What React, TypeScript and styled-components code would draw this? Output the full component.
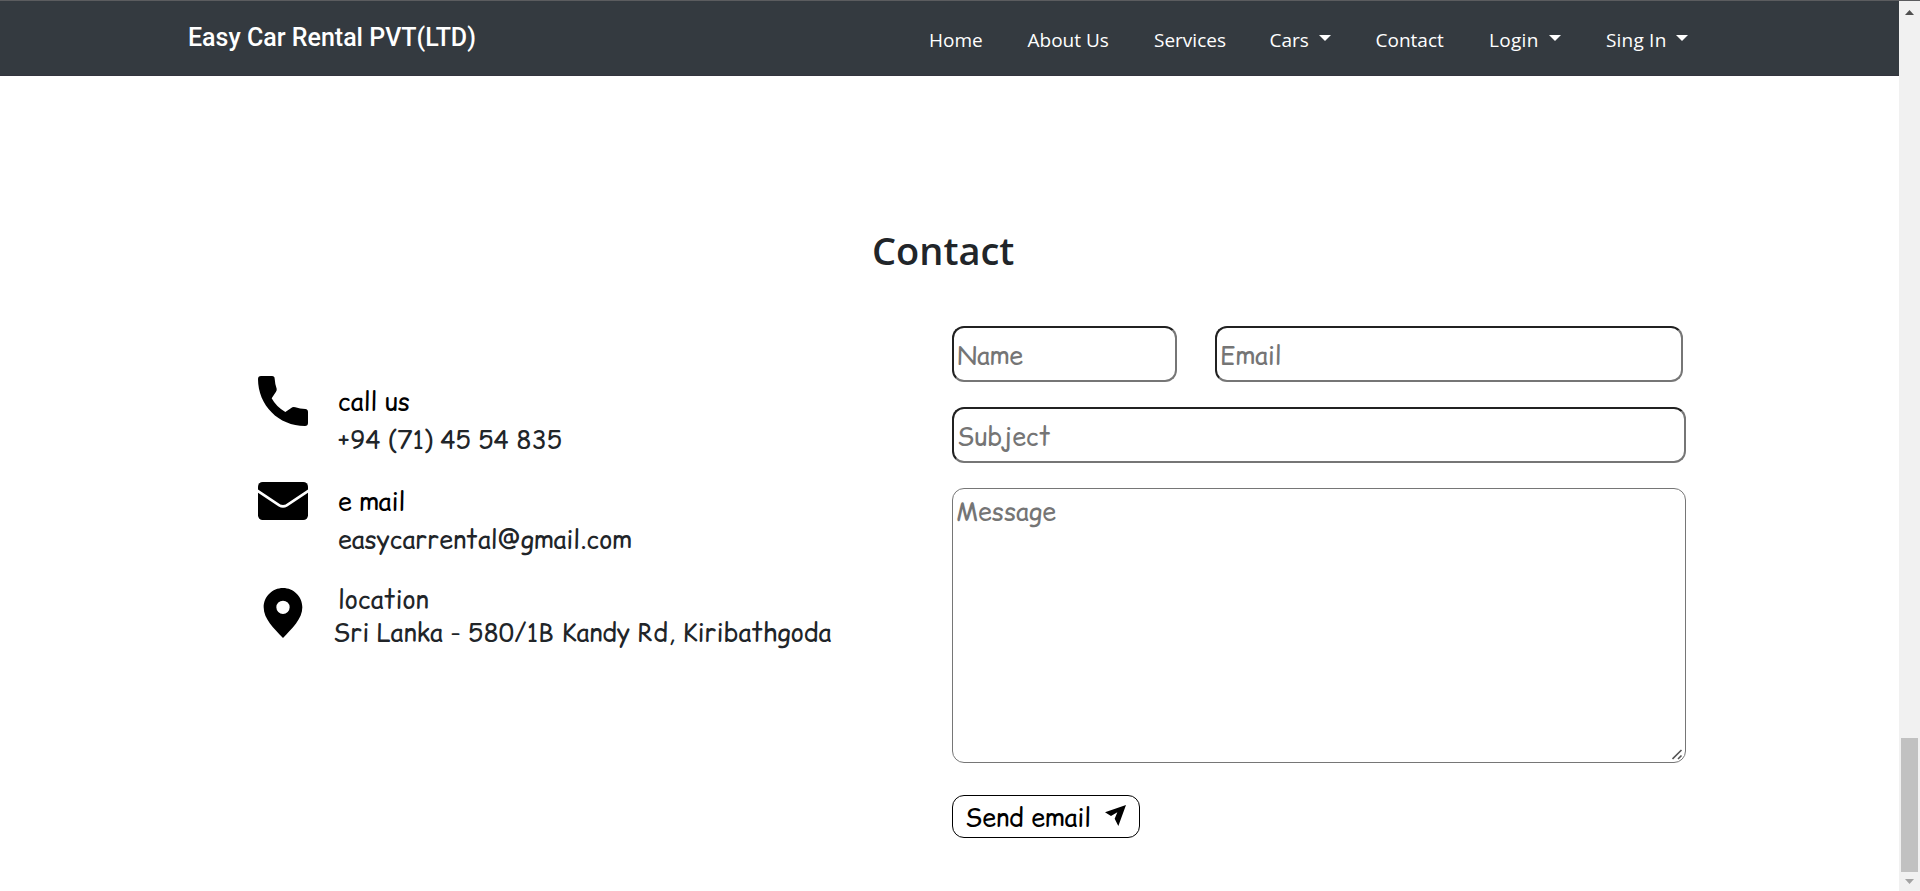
import React from "react";
import styled, { createGlobalStyle } from "styled-components";

const hand = `"Comic Relief", "Comic Neue", Inter, sans-serif`;

const GlobalStyle = createGlobalStyle`
  *, *::before, *::after { box-sizing: border-box; }
  html, body { margin: 0; padding: 0; height: 100%; overflow: hidden; background: #fff; }
  body { color: #212529; font-family: "Open Sans", "Noto Sans", sans-serif; }
`;

const Screen = styled.div`
  display: flex;
  flex-direction: column;
  width: 1920px;
  height: 891px;
  border-top: 1px solid #5b5c5f;
`;

const Viewport = styled.div`
  display: flex;
  flex: 1;
  min-height: 0;
`;

const Page = styled.div`
  flex: 1;
  min-width: 0;
  background: #fff;
`;

const Header = styled.header`
  display: flex;
  justify-content: space-between;
  height: 75px;
  padding: 0 209px 0 188px;
  background: #343a40;
  border-bottom: 1px solid #33343e;
  color: #fff;
`;

const Brand = styled.a`
  margin-top: 22px;
  font: 500 25px/29px Roboto, sans-serif;
  white-space: nowrap;
`;

const Nav = styled.nav`
  display: grid;
  grid-template-columns: 98.5px 126.5px 115.5px 106px 113.5px 117px 84px;
  margin-top: 26px;
`;

const NavLink = styled.a<{ $spacing?: number }>`
  display: flex;
  font-size: 19px;
  line-height: 26px;
  letter-spacing: ${(p) => p.$spacing ?? 0}px;
  white-space: nowrap;
`;

const Caret = styled.span`
  width: 12px;
  height: 6px;
  margin: 8px 0 0 10px;
  border: 6px solid transparent;
  border-top-color: #fff;
  border-bottom: 0;
`;

const Section = styled.main`
  padding: 148px 213px 0 258px;
`;

const Heading = styled.h2`
  margin: 0 0 50px 614px;
  font-size: 38px;
  font-weight: 600;
  line-height: 52px;
`;

const Columns = styled.div`
  display: grid;
  grid-template-columns: 694px 734px;
`;

const InfoList = styled.div`
  padding-top: 50px;
`;

const InfoRow = styled.div<{ $height: number }>`
  display: grid;
  grid-template-columns: 80px 1fr;
  align-items: start;
  height: ${(p) => p.$height}px;
`;

const InfoText = styled.div<{ $top: number; $gap: number }>`
  display: flex;
  flex-direction: column;
  gap: ${(p) => p.$gap}px;
  margin-top: ${(p) => p.$top}px;
`;

const Line = styled.span<{ $black?: boolean; $shift?: number; $height?: number }>`
  margin-left: ${(p) => p.$shift ?? 0}px;
  font: 25px/${(p) => p.$height ?? 35}px ${hand};
  font-feature-settings: "cv11";
  color: ${(p) => (p.$black ? "#000" : "#212529")};
  white-space: nowrap;
`;

const Form = styled.form`
  display: flex;
  flex-direction: column;
  align-items: flex-start;
`;

const FieldRow = styled.div`
  display: flex;
  gap: 38px;
  margin-bottom: 25px;
`;

const Input = styled.input<{ $width: number }>`
  width: ${(p) => p.$width}px;
  height: 56px;
  padding: 3px 2px 1px 3px;
  border: 2px inset #767676;
  border-radius: 12px;
  background: #fff;
  font: 25px ${hand};
  font-feature-settings: "cv11";
  &::placeholder { color: #757575; }
`;

const MessageBox = styled.div`
  position: relative;
`;

const Message = styled.textarea`
  display: block;
  width: 734px;
  height: 275px;
  padding: 5px 2px 2px 3px;
  border: 1px solid #767676;
  border-radius: 12px;
  background: #fff;
  font: 25px/35px ${hand};
  font-feature-settings: "cv11";
  resize: none;
  &::placeholder { color: #757575; }
`;

const Grip = styled.svg`
  position: absolute;
  right: 3px;
  bottom: 3px;
  width: 11px;
  height: 11px;
`;

const SendButton = styled.button`
  display: flex;
  justify-content: space-between;
  width: 188px;
  height: 43px;
  margin-top: 32px;
  padding: 4px 13px 0 12px;
  border: 1px solid #000;
  border-radius: 12px;
  background: #fff;
`;

const PlaneIcon = styled.svg`
  display: block;
  width: 21px;
  height: 21px;
  margin-top: 5px;
`;

const Scrollbar = styled.div`
  display: flex;
  flex-direction: column;
  align-items: center;
  width: 21px;
  background: #f1f1f1;
`;

const Track = styled.div`
  display: flex;
  flex: 1;
  flex-direction: column;
  justify-content: flex-end;
`;

const Thumb = styled.div`
  width: 17px;
  height: 134px;
  background: #c1c1c1;
`;

const ScrollArrow = styled.div<{ $down?: boolean }>`
  width: 9px;
  height: 5px;
  margin: ${(p) => (p.$down ? "7px 0 7px" : "9px 0 8px")};
  background: ${(p) => (p.$down ? "#a3a3a3" : "#505050")};
  clip-path: ${(p) => (p.$down ? "polygon(0 0, 100% 0, 50% 100%)" : "polygon(0 100%, 100% 100%, 50% 0)")};
`;

const PhoneIcon = () => (
  <svg width="50" height="50" viewBox="0 0 150 150">
    <path d="M9 0H42Q50 0 50 8Q51 24 56 38Q57 43 54 47L41 67Q55 93 82 108L103 94Q107 92 112 94Q126 99 142 99Q150 100 150 108V141Q150 150 141 150C62 150 0 88 0 9Q0 0 9 0Z" />
  </svg>
);

const MailIcon = () => (
  <svg width="50" height="38" viewBox="0 0 150 114">
    <rect width="150" height="114" rx="14" />
    <path d="M-4 25L64 70Q75 76 86 70L154 25" fill="none" stroke="#fff" strokeWidth="8" />
  </svg>
);

const PinIcon = () => (
  <svg width="50" height="50" viewBox="0 0 150 150">
    <path fillRule="evenodd" d="M75 0C43 0 17 26 17 58C17 93 48 122 75 150C102 122 133 93 133 58C133 26 107 0 75 0ZM75 38A20 20 0 1 1 75 78A20 20 0 1 1 75 38Z" />
  </svg>
);

export default function App() {
  return (
    <Screen>
      <GlobalStyle />
      <Viewport>
        <Page>
          <Header>
            <Brand>Easy Car Rental PVT(LTD)</Brand>
            <Nav>
              <NavLink>Home</NavLink>
              <NavLink>About Us</NavLink>
              <NavLink>Services</NavLink>
              <NavLink>Cars<Caret /></NavLink>
              <NavLink>Contact</NavLink>
              <NavLink $spacing={0.3}>Login<Caret /></NavLink>
              <NavLink $spacing={0.2}>Sing In<Caret /></NavLink>
            </Nav>
          </Header>
          <Section>
            <Heading>Contact</Heading>
            <Columns>
              <InfoList>
                <InfoRow $height={106}>
                  <PhoneIcon />
                  <InfoText $top={8} $gap={3}>
                    <Line $black>call us</Line>
                    <Line>+94 (71) 45 54 835</Line>
                  </InfoText>
                </InfoRow>
                <InfoRow $height={106}>
                  <MailIcon />
                  <InfoText $top={2} $gap={3}>
                    <Line $black>e mail</Line>
                    <Line>easycarrental@gmail.com</Line>
                  </InfoText>
                </InfoRow>
                <InfoRow $height={80}>
                  <PinIcon />
                  <InfoText $top={-5} $gap={0}>
                    <Line $height={33}>location</Line>
                    <Line $height={33} $shift={-5}>Sri Lanka - 580/1B Kandy Rd, Kiribathgoda</Line>
                  </InfoText>
                </InfoRow>
              </InfoList>
              <Form>
                <FieldRow>
                  <Input $width={225} placeholder="Name" />
                  <Input $width={468} placeholder="Email" />
                </FieldRow>
                <FieldRow>
                  <Input $width={734} placeholder="Subject" />
                </FieldRow>
                <MessageBox>
                  <Message placeholder="Message" />
                  <Grip viewBox="0 0 11 11">
                    <path d="M0.5 10L9.5 1M6 10L9.5 6.5" fill="none" stroke="#555" strokeWidth="1.6" />
                  </Grip>
                </MessageBox>
                <SendButton type="button">
                  <Line $black>Send email</Line>
                  <PlaneIcon viewBox="0 0 63 63">
                    <path d="M0 22L63 0L40 63L29 41L37 22L18 33Z" />
                  </PlaneIcon>
                </SendButton>
              </Form>
            </Columns>
          </Section>
        </Page>
        <Scrollbar>
          <ScrollArrow />
          <Track>
            <Thumb />
          </Track>
          <ScrollArrow $down />
        </Scrollbar>
      </Viewport>
    </Screen>
  );
}
